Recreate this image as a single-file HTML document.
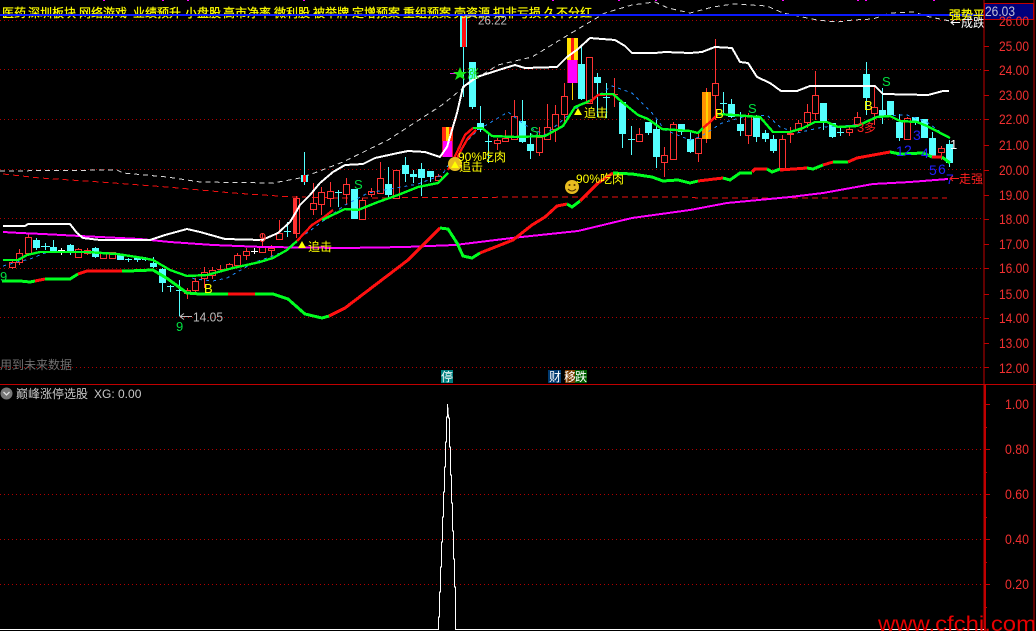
<!DOCTYPE html>
<html><head><meta charset="utf-8"><style>
html,body{margin:0;padding:0;background:#000;width:1036px;height:631px;overflow:hidden}
svg{display:block}
text{font-family:"Liberation Sans","WenQuanYi Zen Hei","Noto Sans CJK SC",sans-serif}
.c{font-family:"WenQuanYi Zen Hei","Noto Sans CJK SC",sans-serif;font-size:12px}
.ax{fill:#f03030;font-size:13.5px}
.g{fill:#00e040;font-size:13px}
.b{fill:#2020ff;font-size:14px}
</style></head><body>
<svg width="1036" height="631" viewBox="0 0 1036 631" xmlns="http://www.w3.org/2000/svg">
<rect width="1036" height="631" fill="#000"/>
<!-- grid -->
<g stroke="#b00000" stroke-width="1" stroke-dasharray="1 3" shape-rendering="crispEdges">
<path d="M0 20.5H984M0 69.5H984M0 119.5H984M0 169.5H984M0 218.5H984M0 268.5H984M0 317.5H984M0 367.5H984M0 449.5H984M0 494.5H984M0 539.5H984M0 584.5H984"/>
</g>
<!-- magenta top dots -->
<path d="M103 0h2M162 0h2M187 0h2M303 0h2M552 0h2M618 0h2M655 0h2M782 0h2M857 0h2M865 0h2M933 0h2" stroke="#ff00ff" stroke-width="2"/>
<!-- bands -->
<polyline fill="none" stroke="#d8d8d8" stroke-width="1" stroke-dasharray="5 4" shape-rendering="crispEdges" points="0,171 117,170 123,173 167,177 200,182 273,183 300,178 317,172 343,162 388,140 442,105 458,92 477,78 498,65 532,57 568,35 605,13 632,5 655,2 668,8 690,13 713,7 733,4 767,6 783,13 817,20 837,22 853,20 873,19 890,13 913,12 930,17 950,21"/>
<polyline fill="none" stroke="#f01010" stroke-width="1" stroke-dasharray="6 4" shape-rendering="crispEdges" points="3,174 40,178 100,182 167,187 233,193 293,197 345,198 548,197 690,197 697,198 947,198"/>
<!-- wicks -->
<g shape-rendering="crispEdges" fill="none">
<path stroke="#ff3232" d="M12.5 260V269M19.5 249V265M28.5 234V255M78.5 248V258M87.5 248V255M187.5 288V299M195.5 278V292M204.5 267V288M212.5 267V279M220.5 265V272M229.5 263V270M237.5 253V267M246.5 248V260M262.5 233V253M271.5 245V258M279.5 220V240M296.5 196V238M313.5 183V215M321.5 187V215M330.5 182V207M346.5 178V205M362.5 198V220M371.5 188V197M380.5 162V193M438.5 174V184M497.5 138V150M505.5 130V142M514.5 100V116M539.5 127V156M547.5 104V140M555.5 105V142M564.5 83V123M614.5 78V107M639.5 128V142M664.5 147V177M673.5 122V160M698.5 133V162M715.5 39V120M748.5 113V144M782.5 135V169M790.5 127V143M798.5 120V132M807.5 104V128M815.5 71V120M849.5 127V136M857.5 112V125M874.5 87V125M907.5 117V140M941.5 146V160M706.5 88V143"/>
<path stroke="#54ffff" d="M36.5 238V250M53.5 240V253M70.5 244V255M95.5 247V258M137.5 256V262M153.5 257V268M162.5 268V292M304.5 152V185M388.5 167V197M405.5 157V182M413.5 170V183M421.5 163V196M430.5 171V182M463.5 15V97M472.5 62V109M480.5 106V132M522.5 100V143M530.5 133V159M581.5 47V100M597.5 73V117M622.5 102V148M648.5 122V135M656.5 120V168M681.5 124V135M690.5 130V153M731.5 99V118M740.5 112V136M756.5 115V142M765.5 130V142M773.5 135V153M823.5 103V130M832.5 123V138M866.5 62V115M882.5 88V124M899.5 114V141M915.5 117V125M932.5 132V158M949.5 140V167M45.5 243V250M128.5 258V262M145.5 257V261M170.5 285V292M179.5 280V316M287.5 222V237M338.5 190V207M488.5 132V163M606.5 83V118M631.5 126V155M723.5 92V115M840.5 128V136M41 246.5H50M125 259.5H132M142 259.5H149M167 286.5H174M176 290.5H183M284 231.5H291M335 192.5H342M485 141.5H492M603 97.5H610M628 139.5H635M720 103.5H727M837 132.5H844"/>
<path stroke="#ffffff" d="M61.5 248V255M58 250.5H65M254.5 248V254M251 251.5H258"/>
<path stroke="#ff3232" d="M611 94.5H618M217 269.5H224"/>
<path stroke="#ffd000" d="M572.5 83V100"/>
</g>
<!-- red hollow bodies -->
<g shape-rendering="crispEdges" fill="#000" stroke="#ff3232">
<rect x="9.5" y="262.5" width="6" height="5"/><rect x="16.5" y="253.5" width="6" height="9"/><rect x="25.5" y="237.5" width="6" height="16"/><rect x="75.5" y="249.5" width="6" height="8"/><rect x="84.5" y="250.5" width="6" height="3"/><rect x="100.5" y="252.5" width="6" height="6"/><rect x="109.5" y="252.5" width="6" height="6"/><rect x="184.5" y="290.5" width="6" height="3"/><rect x="192.5" y="281.5" width="6" height="9"/><rect x="201.5" y="272.5" width="6" height="6"/><rect x="209.5" y="270.5" width="6" height="5"/><rect x="226.5" y="264.5" width="6" height="4"/><rect x="234.5" y="255.5" width="6" height="10"/><rect x="243.5" y="251.5" width="6" height="4"/><rect x="259.5" y="247.5" width="6" height="5"/><rect x="268.5" y="248.5" width="6" height="2"/><rect x="276.5" y="233.5" width="6" height="6"/><rect x="293.5" y="198.5" width="6" height="35"/><rect x="310.5" y="203.5" width="6" height="6"/><rect x="318.5" y="192.5" width="6" height="12"/><rect x="327.5" y="191.5" width="6" height="7"/><rect x="343.5" y="184.5" width="6" height="10"/><rect x="359.5" y="200.5" width="6" height="19"/><rect x="368.5" y="191.5" width="6" height="3"/><rect x="377.5" y="178.5" width="6" height="15"/><rect x="393.5" y="170.5" width="6" height="28"/><rect x="435.5" y="176.5" width="6" height="4"/><rect x="494.5" y="140.5" width="6" height="3"/><rect x="502.5" y="138.5" width="6" height="3"/><rect x="511.5" y="116.5" width="6" height="23"/><rect x="536.5" y="137.5" width="6" height="15"/><rect x="544.5" y="127.5" width="6" height="12"/><rect x="552.5" y="114.5" width="6" height="15"/><rect x="561.5" y="96.5" width="6" height="18"/><rect x="586.5" y="57.5" width="6" height="46"/><rect x="636.5" y="134.5" width="6" height="7"/><rect x="661.5" y="155.5" width="6" height="7"/><rect x="670.5" y="124.5" width="6" height="35"/><rect x="695.5" y="138.5" width="6" height="15"/><rect x="712.5" y="83.5" width="6" height="12"/><rect x="745.5" y="116.5" width="6" height="19"/><rect x="779.5" y="139.5" width="6" height="29"/><rect x="787.5" y="133.5" width="6" height="1"/><rect x="795.5" y="123.5" width="6" height="7"/><rect x="804.5" y="112.5" width="6" height="10"/><rect x="812.5" y="95.5" width="6" height="18"/><rect x="846.5" y="129.5" width="6" height="3"/><rect x="854.5" y="117.5" width="6" height="7"/><rect x="871.5" y="107.5" width="6" height="6"/><rect x="904.5" y="118.5" width="6" height="21"/><rect x="938.5" y="148.5" width="6" height="4"/>
</g>
<rect x="294" y="199" width="3" height="34" fill="#ff3232" shape-rendering="crispEdges"/>
<!-- cyan bodies -->
<g shape-rendering="crispEdges" fill="#54ffff">
<rect x="33" y="240" width="7" height="8"/><rect x="50" y="247" width="7" height="5"/><rect x="67" y="245" width="7" height="7"/><rect x="92" y="248" width="7" height="9"/><rect x="117" y="254" width="7" height="6"/><rect x="134" y="258" width="7" height="2"/><rect x="150" y="263" width="7" height="4"/><rect x="159" y="269" width="7" height="14"/><rect x="301" y="175" width="7" height="7"/><rect x="351" y="189" width="7" height="30"/><rect x="385" y="184" width="7" height="11"/><rect x="402" y="165" width="7" height="9"/><rect x="410" y="174" width="7" height="3"/><rect x="418" y="169" width="7" height="9"/><rect x="427" y="171" width="7" height="6"/><rect x="460" y="15" width="7" height="32"/><rect x="469" y="62" width="7" height="45"/><rect x="477" y="123" width="7" height="7"/><rect x="519" y="121" width="7" height="21"/><rect x="527" y="144" width="7" height="7"/><rect x="578" y="64" width="7" height="35"/><rect x="594" y="77" width="7" height="6"/><rect x="619" y="102" width="7" height="32"/><rect x="645" y="122" width="7" height="11"/><rect x="653" y="129" width="7" height="28"/><rect x="678" y="124" width="7" height="8"/><rect x="687" y="139" width="7" height="13"/><rect x="728" y="104" width="7" height="13"/><rect x="737" y="124" width="7" height="7"/><rect x="753" y="116" width="7" height="21"/><rect x="762" y="133" width="7" height="6"/><rect x="770" y="139" width="7" height="12"/><rect x="820" y="103" width="7" height="19"/><rect x="829" y="123" width="7" height="14"/><rect x="863" y="74" width="7" height="24"/><rect x="879" y="110" width="7" height="7"/><rect x="887" y="101" width="7" height="14"/><rect x="896" y="122" width="7" height="16"/><rect x="912" y="117" width="7" height="5"/><rect x="921" y="119" width="7" height="19"/><rect x="929" y="138" width="7" height="19"/><rect x="946" y="144" width="7" height="19"/>
<rect x="303" y="175" width="3" height="7" fill="#ff1010"/>
<rect x="462" y="15" width="4" height="32" fill="#ff1010"/>
</g>
<!-- striped boxes -->
<g shape-rendering="crispEdges">
<rect x="442" y="127" width="11" height="14" fill="#ff2a10"/><rect x="446" y="127" width="3" height="14" fill="#ffd800"/>
<rect x="442" y="141" width="11" height="16" fill="#d01040"/><rect x="443" y="141" width="9" height="16" fill="#ff00ff"/>
<rect x="567" y="38" width="11" height="22" fill="#ffe000"/><rect x="571" y="38" width="3" height="22" fill="#ff1a10"/>
<rect x="567" y="60" width="11" height="23" fill="#d01040"/><rect x="568" y="60" width="9" height="23" fill="#ff00ff"/>
<rect x="702" y="92" width="9" height="47" fill="#ff9000"/><rect x="706" y="92" width="2" height="47" fill="#ffd000"/>
</g>
<!-- blue dotted -->
<polyline fill="none" stroke="#1e8cff" stroke-width="1" stroke-dasharray="3 4" shape-rendering="crispEdges" points="3,266 17,262 30,259 45,253 60,252 110,253 150,259 170,270 195,279 213,281 227,278 253,263 283,252 300,238 345,205 368,193 418,184 442,175 458,150 478,130 508,112 525,125 545,135 578,107 592,100 612,86 632,93 652,113 665,130 690,140 700,137 722,123 743,117 767,115 780,127 797,133 823,127 857,125 877,116 907,115 927,122 947,137"/>
<!-- magenta -->
<polyline fill="none" stroke="#ff00ff" stroke-width="2" shape-rendering="crispEdges" points="3,232 20,233 43,234 80,236 140,239 170,242 213,245 263,247 345,248 405,247 455,245 512,238 578,231 632,218 690,210 727,203 790,197 823,193 873,184 910,182 948,179"/>
<!-- white main -->
<polyline fill="none" stroke="#fff" stroke-width="2" stroke-linejoin="round" shape-rendering="crispEdges" points="3,226 25,226 28,224 70,224 77,233 83,238 100,240 150,240 165,235 187,229 200,232 225,239 262,240 278,233 290,222 296,212 300,205 310,195 320,183 333,172 345,165 363,164 375,158 398,153 408,151 425,152 440,157 447,147 457,113 463,87 477,77 505,68 515,65 525,68 557,67 567,57 578,49 590,38 602,39 615,40 625,46 632,53 655,53 665,52 690,53 702,52 715,47 732,48 740,62 748,63 757,77 770,83 781,91 797,91 810,86 875,86 883,94 928,95 943,91 949,91"/>
<!-- upper MA -->
<g fill="none" stroke-width="2.4" stroke-linejoin="round" shape-rendering="crispEdges">
<polyline stroke="#00ff20" points="3,260 18,260 27,255 40,252 87,252 117,254 143,258 153,260 170,270 187,276 207,275 233,268 260,262 273,258 287,250 297,241"/>
<polyline stroke="#ff1010" points="297,241 312,225 323,218 333,210"/>
<polyline stroke="#00ff20" points="322,220 345,209 358,210 378,202 398,195 418,187 438,183 448,173"/>
<polyline stroke="#ff1010" points="448,170 458,150 465,135 473,128"/>
<polyline stroke="#ff1010" points="452,170 460,152 468,138 476,130"/>
<polyline stroke="#00ff20" points="473,128 482,128 492,136 515,137 545,136 563,126 575,107 592,100"/>
<polyline stroke="#ff1010" points="590,102 598,95 613,94"/>
<polyline stroke="#00ff20" points="600,94 613,94 622,102 638,115 648,119 662,129 690,131 698,133 703,128"/>
<polyline stroke="#ff1010" points="703,128 710,122 718,114"/>
<polyline stroke="#00ff20" points="718,114 733,115 760,117 773,132 790,132 803,128 815,122 827,122 838,127 857,126 877,117 890,116 900,121 917,122 927,126 950,138"/>
</g>
<!-- lower thick -->
<g fill="none" stroke-width="3" stroke-linejoin="round" shape-rendering="crispEdges">
<polyline stroke="#00ff20" points="2,281 20,281 30,282 35,281"/>
<polyline stroke="#ff1010" points="35,281 45,279"/>
<polyline stroke="#00ff20" points="45,279 70,279 78,274"/>
<polyline stroke="#ff1010" points="78,274 87,271 122,271"/>
<polyline stroke="#00ff20" points="122,271 128,271 153,270 168,279 187,293 200,294 228,294"/>
<polyline stroke="#ff1010" points="228,294 255,294"/>
<polyline stroke="#00ff20" points="255,294 273,294 288,299 305,314 322,318 329,316"/>
<polyline stroke="#ff1010" points="329,316 345,308 408,260 440,228"/>
<polyline stroke="#00ff20" points="440,228 448,229 457,243 463,256 472,258 480,253"/>
<polyline stroke="#ff1010" points="480,253 513,240 532,225 545,217 557,206 567,204"/>
<polyline stroke="#00ff20" points="567,204 572,207 580,201"/>
<polyline stroke="#ff1010" points="580,201 598,183 613,173"/>
<polyline stroke="#00ff20" points="613,173 632,174 652,177 663,181 678,180 690,183 698,181"/>
<polyline stroke="#ff1010" points="698,181 723,178"/>
<polyline stroke="#00ff20" points="723,178 730,180 740,173 752,173"/>
<polyline stroke="#ff1010" points="752,172 755,169 767,169"/>
<polyline stroke="#00ff20" points="767,169 772,172 780,169"/>
<polyline stroke="#ff1010" points="780,170 807,168"/>
<polyline stroke="#00ff20" points="807,168 813,169 823,165"/>
<polyline stroke="#ff1010" points="823,165 833,162"/>
<polyline stroke="#00ff20" points="833,162 848,162"/>
<polyline stroke="#ff1010" points="848,162 857,158 890,152"/>
<polyline stroke="#00ff20" points="890,152 900,154 923,153 932,157"/>
<polyline stroke="#ff1010" points="932,157 942,157"/>
<polyline stroke="#00ff20" points="942,157 950,163"/>
</g>
<!-- top blue line and tags -->
<g class="c" fill="#ffff00" stroke="#ffff00" stroke-width=".25">
<text x="2" y="17">医药</text><text x="28" y="17">深圳板块</text><text x="79" y="17">网络游戏</text><text x="133" y="17">业绩预升</text><text x="185" y="17">小盘股</text><text x="223" y="17">高市净率</text><text x="274" y="17">微利股</text><text x="313" y="17">被举牌</text><text x="352" y="17">定增预案</text><text x="403" y="17">重组预案</text><text x="454" y="17">壳资源</text><text x="493" y="17">扣非亏损</text><text x="544" y="17">久不分红</text>
</g>
<rect x="0" y="14" width="984" height="2" fill="#0a1aff" shape-rendering="crispEdges"/>
<!-- labels -->
<text x="478" y="24.5" fill="#bdbdbd" font-size="12" textLength="29" lengthAdjust="spacingAndGlyphs">26.22</text>
<path d="M465 16H476" stroke="#bdbdbd"/>
<path d="M192 316.5H180M184 313.5L180 316.5L184 319.5" stroke="#bdbdbd" fill="none"/>
<text x="193" y="321.5" fill="#bdbdbd" font-size="12.5" textLength="30" lengthAdjust="spacingAndGlyphs">14.05</text>
<text x="176" y="331" class="g">9</text><text x="0" y="281" class="g">9</text><text x="259" y="242" fill="#ff3232" font-size="13">9</text>
<text x="354" y="189" class="g">S</text><text x="530" y="136" class="g">S</text><text x="748" y="113" class="g">S</text><text x="882" y="86" class="g">S</text>
<g fill="#ffff00" font-size="13"><text x="204" y="293">B</text><text x="715" y="118">B</text><text x="864" y="110">B</text></g>
<text x="857" y="132" fill="#ff2020" font-size="13">3</text><text x="864" y="132" class="c" fill="#ff2020">多</text>
<text x="913" y="140" class="b">3</text><text x="896" y="156" class="b">1</text><text x="904" y="155" class="b">2</text><text x="921" y="158" class="b">4</text><text x="929" y="175" class="b">5</text><text x="938" y="174" class="b">6</text><text x="946" y="184" class="b">7</text>
<text x="950" y="149" fill="#fff" font-size="13">1</text>
<!-- star -->
<path d="M450 73.5H460" stroke="#e020e0"/>
<path d="M460 67L462 72L467 72L463 75L465 80L460 77L455 80L457 75L453 72L458 72Z" fill="#18e818"/>
<text x="467" y="78" class="c" fill="#18e818">涨</text>
<!-- smileys -->
<circle cx="455" cy="164" r="7" fill="#e8bc20"/>
<circle cx="572" cy="187" r="7" fill="#e8bc20"/>
<circle cx="569.5" cy="185" r="1" fill="#553300"/><circle cx="574.5" cy="185" r="1" fill="#553300"/>
<path d="M568 189Q572 193 576 189" fill="none" stroke="#553300"/>
<g fill="#ffff00">
<path d="M455 161L459 168H451Z"/><path d="M302 241L306 248H298Z"/><path d="M578 108L582 115H574Z"/>
<g class="c"><text x="308" y="251">追击</text><text x="584" y="117">追击</text><text x="459" y="171">追击</text></g>
<text x="458" y="161" font-size="12">90%<tspan class="c">吃肉</tspan></text>
<text x="576" y="183" font-size="12">90%<tspan class="c">吃肉</tspan></text>
</g>
<!-- right top -->
<text x="949" y="19" class="c" fill="#ffff00" stroke="#ffff00" stroke-width=".25">强势平</text>
<path d="M960 22.5H951M954 20L951 22.5L954 25" fill="none" stroke="#fff"/>
<text x="961" y="27" class="c" fill="#fff">成跌</text>
<path d="M959 178.5H950M953 176L950 178.5L953 181" fill="none" stroke="#ff2020"/>
<text x="959" y="183" class="c" fill="#ff2020">走强</text>
<!-- frames -->
<g shape-rendering="crispEdges" stroke="#c00000" fill="none">
<path d="M984 0V631M1034 0V631M0 384.5H1036"/>
<path d="M985 631V385" stroke-width="2"/>
<path d="M984 46.5h5M984 70.5h5M984 95.5h5M984 119.5h5M984 145.5h5M984 170.5h5M984 195.5h5M984 219.5h5M984 244.5h5M984 268.5h5M984 294.5h5M984 318.5h5M984 343.5h5M984 367.5h5M985 404.5h5M985 449.5h5M985 494.5h5M985 539.5h5M985 584.5h5M985 427.5h2M985 472.5h2M985 517.5h2M985 562.5h2M985 607.5h2"/>
</g>
<rect x="984.5" y="3.5" width="49" height="16" fill="#00007c" stroke="#c00000" shape-rendering="crispEdges"/>
<text x="985" y="16" fill="#c0c0d8" font-size="13.5" textLength="30" lengthAdjust="spacingAndGlyphs">26.03</text>
<!-- axis labels -->
<g class="ax">
<text x="999" y="26" textLength="30" lengthAdjust="spacingAndGlyphs">26.00</text>
<text x="999" y="51" textLength="30" lengthAdjust="spacingAndGlyphs">25.00</text>
<text x="999" y="75" textLength="30" lengthAdjust="spacingAndGlyphs">24.00</text>
<text x="999" y="100" textLength="30" lengthAdjust="spacingAndGlyphs">23.00</text>
<text x="999" y="124" textLength="30" lengthAdjust="spacingAndGlyphs">22.00</text>
<text x="999" y="150" textLength="30" lengthAdjust="spacingAndGlyphs">21.00</text>
<text x="999" y="175" textLength="30" lengthAdjust="spacingAndGlyphs">20.00</text>
<text x="999" y="200" textLength="30" lengthAdjust="spacingAndGlyphs">19.00</text>
<text x="999" y="224" textLength="30" lengthAdjust="spacingAndGlyphs">18.00</text>
<text x="999" y="249" textLength="30" lengthAdjust="spacingAndGlyphs">17.00</text>
<text x="999" y="273" textLength="30" lengthAdjust="spacingAndGlyphs">16.00</text>
<text x="999" y="299" textLength="30" lengthAdjust="spacingAndGlyphs">15.00</text>
<text x="999" y="323" textLength="30" lengthAdjust="spacingAndGlyphs">14.00</text>
<text x="999" y="348" textLength="30" lengthAdjust="spacingAndGlyphs">13.00</text>
<text x="999" y="373" textLength="30" lengthAdjust="spacingAndGlyphs">12.00</text>
<text x="1005" y="409" textLength="24" lengthAdjust="spacingAndGlyphs">1.00</text>
<text x="1005" y="454" textLength="24" lengthAdjust="spacingAndGlyphs">0.80</text>
<text x="1005" y="499" textLength="24" lengthAdjust="spacingAndGlyphs">0.60</text>
<text x="1005" y="544" textLength="24" lengthAdjust="spacingAndGlyphs">0.40</text>
<text x="1005" y="589" textLength="24" lengthAdjust="spacingAndGlyphs">0.20</text>
</g>
<!-- badges -->
<g shape-rendering="crispEdges">
<rect x="441" y="370" width="12" height="13" fill="#008080"/>
<rect x="548" y="370" width="13" height="13" fill="#003a70"/>
<rect x="565" y="370" width="10" height="13" fill="#7a3c00"/>
<rect x="575" y="370" width="12" height="13" fill="#006000"/>
</g>
<g class="c" fill="#fff"><text x="441" y="381">停</text><text x="549" y="381">财</text><text x="564" y="381">移</text><text x="575" y="381">跌</text></g>
<text x="0" y="369" class="c" fill="#707070">用到未来数据</text>
<!-- lower panel title -->
<circle cx="6.5" cy="393.5" r="6" fill="#777"/>
<path d="M3.5 392L6.5 395L9.5 392" fill="none" stroke="#ddd" stroke-width="1.3"/>
<text x="16" y="398" class="c" fill="#c8c8c8">巅峰涨停选股</text>
<text x="94" y="398" fill="#c8c8c8" font-size="12">XG: 0.00</text>
<!-- spike -->
<polyline fill="none" stroke="#fff" stroke-width="1" shape-rendering="crispEdges" points="0,629.5 438.5,629.5 438.5,617 439.5,617 439.5,592 440.5,592 440.5,567 441.5,567 441.5,542 442.5,542 442.5,517 443.5,517 443.5,492 444.5,492 444.5,467 445.5,467 445.5,442 446.5,442 446.5,417 447.5,417 447.5,404 448.5,418 449.5,418 449.5,447 450.5,447 450.5,475 451.5,475 451.5,503 452.5,503 452.5,531 453.5,531 453.5,559 454.5,559 454.5,587 455.5,587 455.5,629.5 984,629.5"/>
<text x="878" y="631" fill="#e80000" font-size="21.5" textLength="158" lengthAdjust="spacingAndGlyphs">www.cfchi.com</text>
</svg>
</body></html>
